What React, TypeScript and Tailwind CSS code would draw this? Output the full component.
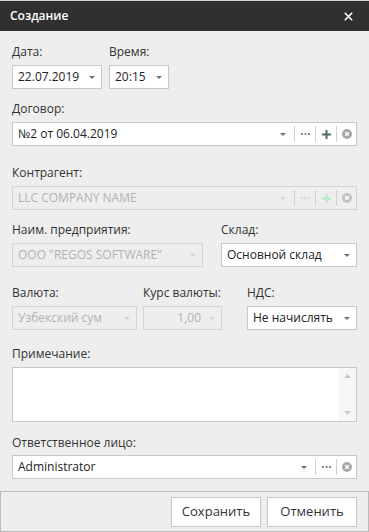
import React from "react";

const FONT = { fontFamily: '"Open Sans", "Noto Sans", sans-serif' };

function Arrow({ disabled = false }: { disabled?: boolean }) {
  return (
    <svg width="6" height="3" viewBox="0 0 6 3">
      <path d="M0 0H6L3 3Z" fill={disabled ? "#d6d6d6" : "#6f6f6f"} />
    </svg>
  );
}

function Sep() {
  return <div className="w-px h-[16px] bg-[#d0d0d0]" />;
}

function Dots({ disabled = false }: { disabled?: boolean }) {
  const c = disabled ? "#d6d6d6" : "#8a8a8a";
  return (
    <svg width="9" height="2" viewBox="0 0 9 2">
      <rect x="0" y="0" width="2" height="2" fill={c} />
      <rect x="3.5" y="0" width="2" height="2" fill={c} />
      <rect x="7" y="0" width="2" height="2" fill={c} />
    </svg>
  );
}

function Plus({ disabled = false }: { disabled?: boolean }) {
  const c = disabled ? "#b4ecc4" : "#4d6e57";
  return (
    <svg width="9" height="9" viewBox="0 0 9 9">
      <rect x="3.5" y="0" width="2" height="9" fill={c} />
      <rect x="0" y="3.5" width="9" height="2" fill={c} />
    </svg>
  );
}

function ClearIcon({ disabled = false }: { disabled?: boolean }) {
  const c = disabled ? "#c4c4c4" : "#a8a8a8";
  return (
    <svg width="10" height="10" viewBox="0 0 10 10">
      <circle cx="5" cy="5" r="5" fill={c} />
      <path d="M3.2 3.2L6.8 6.8M6.8 3.2L3.2 6.8" stroke="#fff" strokeWidth="1.4" />
    </svg>
  );
}

function Label({ children, className = "" }: { children: React.ReactNode; className?: string }) {
  return <div className={"text-[12px] leading-[17px] text-[#333333] " + className}>{children}</div>;
}

function Select({
  value,
  disabled = false,
  className = "",
  right = false,
}: {
  value: string;
  disabled?: boolean;
  className?: string;
  right?: boolean;
}) {
  return (
    <div
      className={
        "h-[24px] flex items-center border " +
        (disabled ? "border-[#d3d3d3] bg-[#eeeeee] text-[#b3b3b3]" : "border-[#c8c8c8] bg-white text-[#222222]") +
        " " +
        className
      }
    >
      <div className={"flex-1 min-w-0 whitespace-nowrap overflow-hidden text-[12px] pl-[5px] " + (right ? "text-right pr-[4px]" : "")}>
        {value}
      </div>
      <div className="w-[16px] flex items-center justify-center pr-[2px]">
        <Arrow disabled={disabled} />
      </div>
    </div>
  );
}

function Lookup({
  value,
  disabled = false,
  plus = true,
}: {
  value: string;
  disabled?: boolean;
  plus?: boolean;
}) {
  return (
    <div
      className={
        "h-[24px] flex items-center border " +
        (disabled ? "border-[#d3d3d3] bg-[#eeeeee] text-[#b3b3b3]" : "border-[#c8c8c8] bg-white text-[#222222]")
      }
    >
      <div className="flex-1 min-w-0 whitespace-nowrap overflow-hidden text-[12px] pl-[5px]">{value}</div>
      <div className="w-[22px] flex items-center justify-center">
        <Arrow disabled={disabled} />
      </div>
      <Sep />
      <div className="w-[20px] flex items-center justify-center">
        <Dots disabled={disabled} />
      </div>
      <Sep />
      {plus && (
        <>
          <div className="w-[20px] flex items-center justify-center">
            <Plus disabled={disabled} />
          </div>
          <Sep />
        </>
      )}
      <div className="w-[19px] flex items-center justify-center">
        <ClearIcon disabled={disabled} />
      </div>
    </div>
  );
}

export default function App() {
  return (
    <div className="w-[369px] h-[532px] bg-[#eeeeee] flex flex-col overflow-hidden" style={FONT}>
      {/* Title bar */}
      <div className="border-t border-[#d4d4d4] h-[31px] bg-[#303030] flex items-center justify-between pl-[10px] pr-[16px]">
        <span className="text-white text-[12px] font-semibold">Создание</span>
        <svg width="9" height="9" viewBox="0 0 9 9">
          <path d="M0.8 0.8L8.2 8.2M8.2 0.8L0.8 8.2" stroke="#ffffff" strokeWidth="1.6" />
        </svg>
      </div>

      <div className="flex-1 px-[12px] pt-[12px]">
        {/* Row 1 */}
        <div className="flex gap-[7px]">
          <div className="w-[90px]">
            <Label className="mb-[5px]">Дата:</Label>
            <Select value="22.07.2019" />
          </div>
          <div className="w-[60px]">
            <Label className="mb-[5px]">Время:</Label>
            <Select value="20:15" />
          </div>
        </div>

        {/* Договор */}
        <div className="mt-[11px]">
          <Label className="mb-[5px]">Договор:</Label>
          <Lookup value="№2 от 06.04.2019" />
        </div>

        {/* Контрагент */}
        <div className="mt-[18px]">
          <Label className="mb-[5px]">Контрагент:</Label>
          <Lookup value="LLC COMPANY NAME" disabled />
        </div>

        {/* Наим / Склад */}
        <div className="mt-[11px] flex gap-[18px]">
          <div className="w-[191px]">
            <Label className="mb-[5px]">Наим. предприятия:</Label>
            <Select value={'ООО "REGOS SOFTWARE"'} disabled />
          </div>
          <div className="flex-1">
            <Label className="mb-[5px]">Склад:</Label>
            <Select value="Основной склад" />
          </div>
        </div>

        {/* Валюта / Курс / НДС */}
        <div className="mt-[17px] flex">
          <div className="w-[125px] mr-[6px]">
            <Label className="mb-[5px]">Валюта:</Label>
            <Select value="Узбекский сум" disabled />
          </div>
          <div className="w-[79px] mr-[25px]">
            <Label className="mb-[5px] whitespace-nowrap">Курс валюты:</Label>
            <Select value="1,00" disabled right />
          </div>
          <div className="flex-1">
            <Label className="mb-[5px]">НДС:</Label>
            <Select value="Не начислять" />
          </div>
        </div>

        {/* Примечание */}
        <div className="mt-[15px]">
          <Label className="mb-[5px]">Примечание:</Label>
          <div className="h-[55px] border border-[#c8c8c8] bg-white flex">
            <div className="flex-1" />
            <div className="w-[17px] bg-[#f7f7f7] flex flex-col items-center justify-between py-[6px]">
              <svg width="7" height="4" viewBox="0 0 7 4">
                <path d="M0 4H7L3.5 0Z" fill="#c8c8c8" />
              </svg>
              <svg width="7" height="4" viewBox="0 0 7 4">
                <path d="M0 0H7L3.5 4Z" fill="#c8c8c8" />
              </svg>
            </div>
          </div>
        </div>

        {/* Ответственное лицо */}
        <div className="mt-[12px]">
          <Label className="mb-[4px]">Ответственное лицо:</Label>
          <Lookup value="Administrator" plus={false} />
        </div>
      </div>

      {/* Footer */}
      <div className="h-[41px] border border-[#bcbcbc] flex items-center justify-end gap-[6px] pr-[11px]">
        <button className="w-[90px] h-[30px] bg-white border border-[#c8c8c8] text-[13px] text-[#333333]">
          Сохранить
        </button>
        <button className="w-[90px] h-[30px] bg-white border border-[#c8c8c8] text-[13px] text-[#333333]">
          Отменить
        </button>
      </div>
    </div>
  );
}
